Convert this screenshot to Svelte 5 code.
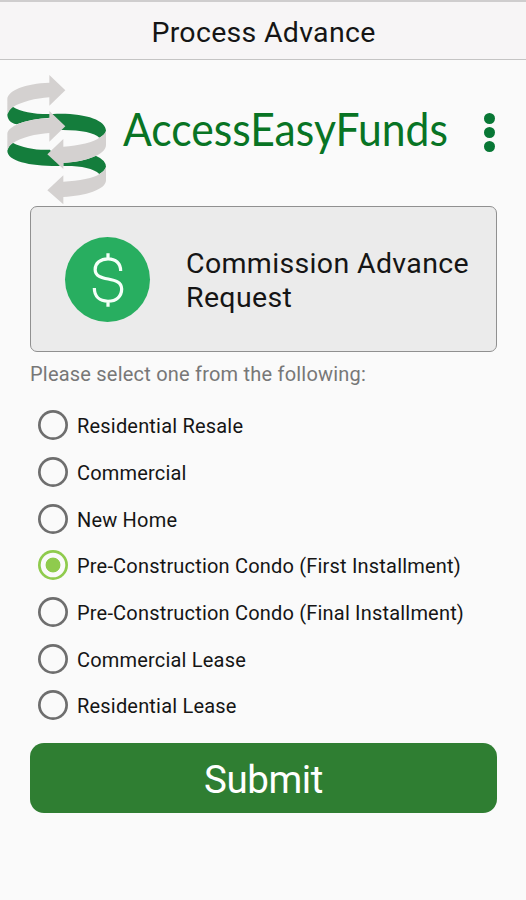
<script lang="ts">
	const options = [
		'Residential Resale',
		'Commercial',
		'New Home',
		'Pre-Construction Condo (First Installment)',
		'Pre-Construction Condo (Final Installment)',
		'Commercial Lease',
		'Residential Lease',
	];

	let selected = $state(options[3]);
</script>

<div class="screen">
	<header class="title-bar">
		<h1>Process Advance</h1>
	</header>

	<div class="brand">
		<svg class="brand-mark" viewBox="15 30 309 390" aria-hidden="true">
			<g fill="#147d3c">
				<path d="M38 125C64 141 108 149 160 147C250 143 318 164 318 198Q314 211 298 218C284 203 240 194 180 195L150 158Q98 160 50 178C29 174 22 162 22 148Q27 133 38 125Z" />
				<path d="M38 233C68 249 110 256 150 254L180 303C90 304 22 288 22 257Q26 241 38 233Z" />
				<path d="M190 293Q248 291 287 272Q318 285 318 306Q313 319 298 327C280 309 240 302 190 303Z" />
			</g>
			<g fill="#d4d1d0">
				<path d="M22 150V103C22 77 76 55 148 53V30L196 76L148 122V97C108 99 62 112 40 125Q25 135 22 150Z" />
				<path d="M22 256V208C22 184 76 162 148 160V138L196 184L148 230V204C108 206 62 219 40 233Q25 243 22 256Z" />
				<path d="M318 198V240C318 270 256 290 190 294V312L142 268L190 222V245C236 242 284 231 298 218Q313 211 318 198Z" />
				<path d="M318 306V346C318 374 256 393 190 396V418L142 376L190 331V350C236 348 284 339 298 327Q313 319 318 306Z" />
			</g>
		</svg>
		<svg class="brand-name" viewBox="0 0 330 64" role="img" aria-label="AccessEasyFunds">
			<text x="0" y="46" textLength="325" lengthAdjust="spacingAndGlyphs">AccessEasyFunds</text>
		</svg>
		<button class="menu" aria-label="Menu">
			<span></span>
			<span></span>
			<span></span>
		</button>
	</div>

	<main>
		<section class="card">
			<div class="coin">
				<svg viewBox="0 0 84 84" aria-hidden="true">
					<path d="M42.5 16V22M42.5 63V69M55 33.5C55 26 50 21.5 42.5 21.5C35 21.5 29.8 26 29.8 32C29.8 46 56 37 56 51.5C56 58.5 51 63.5 42.5 63.5C34 63.5 29 58.5 29 50.5" />
				</svg>
			</div>
			<h2>Commission Advance Request</h2>
		</section>

		<p class="prompt">Please select one from the following:</p>

		<div class="options">
			{#each options as option (option)}
				<label class="option">
					<input type="radio" name="deal" value={option} bind:group={selected} />
					<span>{option}</span>
				</label>
			{/each}
		</div>

		<button class="submit">Submit</button>
	</main>
</div>

<style>
	:global(body) {
		margin: 0;
		background: #fafafa;
	}

	.screen {
		box-sizing: border-box;
		min-height: 900px;
		background: #fafafa;
		font-family: Roboto, sans-serif;
		color: #151515;
	}

	.title-bar {
		box-sizing: border-box;
		height: 60px;
		padding: 3px 0 0 1px;
		display: flex;
		align-items: center;
		justify-content: center;
		background: #f7f5f6;
		border-top: 2px solid #cfcdce;
		border-bottom: 1px solid #c5c4c4;
	}

	h1 {
		margin: 0;
		font-size: 28.5px;
		font-weight: 400;
		letter-spacing: 0.3px;
	}

	.brand {
		display: flex;
		align-items: flex-start;
		height: 131px;
		padding: 15px 0 0 5px;
	}

	.brand-mark {
		flex: none;
		width: 103px;
		height: 130px;
	}

	.brand-name {
		flex: none;
		width: 330px;
		height: 64px;
		margin: 25px 0 0 15px;
		overflow: visible;
	}

	.brand-name text {
		font-family: Lato, sans-serif;
		font-size: 47px;
		fill: #087424;
	}

	.menu {
		display: flex;
		flex-direction: column;
		gap: 3px;
		margin: 38px 0 0 31px;
		padding: 0;
		border: 0;
		background: none;
	}

	.menu span {
		width: 11px;
		height: 11px;
		border-radius: 50%;
		background: #087735;
	}

	main {
		padding: 0 29px 0 30px;
	}

	.card {
		box-sizing: border-box;
		display: flex;
		align-items: center;
		height: 146px;
		padding-left: 34px;
		background: #ebebeb;
		border: 1px solid #909090;
		border-radius: 7px;
	}

	.coin {
		flex: none;
		width: 85px;
		height: 85px;
		border-radius: 50%;
		background: #28ae60;
	}

	.coin path {
		fill: none;
		stroke: #f4fff8;
		stroke-width: 3.2;
	}

	h2 {
		width: 300px;
		margin: 3px 0 0 36px;
		font-size: 28.5px;
		font-weight: 400;
		line-height: 34px;
		letter-spacing: 0.35px;
	}

	.prompt {
		margin: 9px 0 15px;
		font-size: 20px;
		line-height: 26px;
		letter-spacing: 0.21px;
		color: #777;
	}

	.option {
		display: flex;
		align-items: center;
		gap: 9px;
		height: 46.7px;
		padding-left: 8px;
		font-size: 20px;
		letter-spacing: 0.19px;
	}

	.option span {
		padding-top: 2px;
	}

	input {
		appearance: none;
		flex: none;
		width: 30px;
		height: 30px;
		margin: 0;
		border-radius: 50%;
		box-shadow: inset 0 0 0 2.7px #6e6e6e;
	}

	input:checked {
		box-shadow: inset 0 0 0 2.7px #8fcb4d;
		background: radial-gradient(circle, #8fcb4d 7px, transparent 7.8px);
	}

	.submit {
		display: block;
		width: 100%;
		height: 70px;
		margin-top: 14px;
		padding: 4px 0 0;
		border: 0;
		border-radius: 14px;
		background: #2f7e32;
		color: #fff;
		font-family: inherit;
		font-size: 38.5px;
		letter-spacing: -0.4px;
	}
</style>
